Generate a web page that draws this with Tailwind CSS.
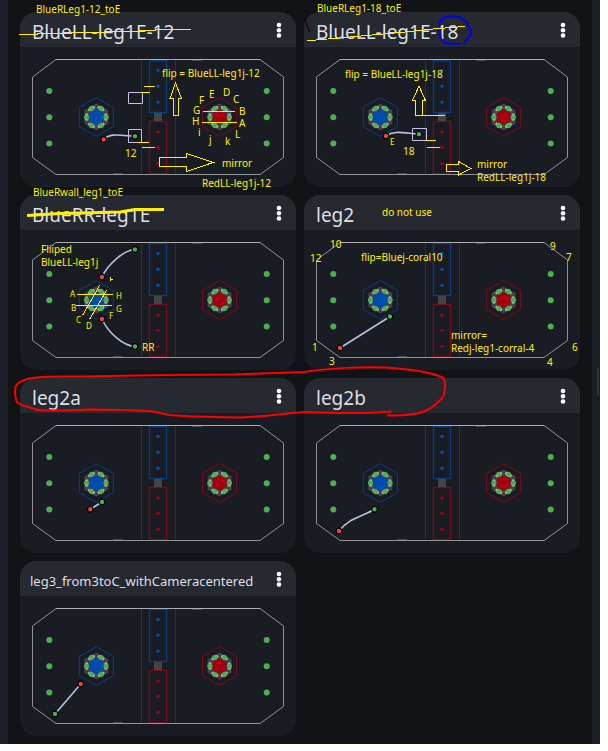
<!DOCTYPE html>
<html lang="en">
<head>
<meta charset="utf-8">
<meta name="viewport" content="width=device-width, initial-scale=1">
<title>Paths</title>
<script src="https://cdn.jsdelivr.net/npm/@tailwindcss/browser@4"></script>
</head>
<body class="bg-white font-['Noto_Sans','Open_Sans',sans-serif]">
<svg class="absolute h-0 w-0" aria-hidden="true">
  <defs>
    <g id="reef">
      <path d="M0-19.3 17-9.7V9.7L0 19.3-17 9.7V-9.7Z" fill="none" stroke="currentColor" stroke-opacity=".72"/>
      <path d="M0-13.500 12-6.800V6.800L0 13.500-12 6.800V-6.800Z" fill="#444447"/>
      <path d="M0-8 7-4V4L0 8-7 4V-4Z" fill="currentColor"/>
      <g id="pair">
        <g id="post"><g fill="#c3b2cc"><circle cx="9.600" cy="-2.200" r="1.500"/><circle cx="9.600" cy="2.200" r="1.500"/></g><circle cx="9.800" r="2.600" fill="#4caf50"/></g>
        <use href="#post" transform="rotate(180)"/>
      </g>
      <use href="#pair" transform="rotate(60)"/>
      <use href="#pair" transform="rotate(120)"/>
    </g>
    <g id="field">
      <path d="M109.500 1V115M143.500 1V115" stroke="#303134" fill="none"/>
      <g fill="none" stroke-width="1.400">
        <rect x="117.500" y="1.500" width="17" height="52" stroke="#0a3d80"/>
        <rect x="117.500" y="62.500" width="17" height="52" stroke="#760d1c"/>
      </g>
      <rect x="122" y="54" width="8" height="8" fill="#444"/>
      <g fill="#0a4aa8"><circle cx="126" cy="11.500" r="1.700"/><circle cx="126" cy="27.300" r="1.700"/><circle cx="126" cy="43.200" r="1.700"/></g>
      <g fill="#a00016"><circle cx="126" cy="73" r="1.700"/><circle cx="126" cy="88.500" r="1.700"/><circle cx="126" cy="104.500" r="1.700"/></g>
      <path d="M24 .5H228L251.500 18V98.500L228 115.500H24L.5 98.500V18Z" fill="none" stroke="#929395"/>
      <path d="M24 .5H228" stroke="#adadaf"/>
      <path d="M160 1.500h10M81 114.500h10" stroke="#4b4b4d"/>
      <g fill="#4caf50"><circle cx="17.300" cy="32" r="3"/><circle cx="17.300" cy="58.200" r="3"/><circle cx="17.300" cy="84.500" r="3"/><circle cx="234.700" cy="32" r="3"/><circle cx="234.700" cy="58.200" r="3"/><circle cx="234.700" cy="84.500" r="3"/></g>
      <use href="#reef" x="64.300" y="58" color="#004bad"/>
      <use href="#reef" x="187.600" y="58" color="#a50012"/>
    </g>
    <circle id="start" r="2.800" fill="#4caf50" stroke="#000" stroke-width="1.200"/>
    <circle id="end" r="2.800" fill="#f44336" stroke="#000" stroke-width="1.200"/>
    <g id="dots" fill="#fff"><circle cx="3" cy="3" r="2.300"/><circle cx="3" cy="8.300" r="2.300"/><circle cx="3" cy="13.500" r="2.300"/></g>
  </defs>
</svg>

<div class="min-h-screen pr-2 pb-[7px]">
<div class="flex min-h-[744px] bg-[#121317]">
  <div class="w-2 shrink-0 bg-[#1a1f27]"></div>
  <main class="grid flex-1 grid-cols-2 content-start gap-2 px-3 pt-3 pb-2">

    <article class="rounded-2xl bg-[#1a1c24]">
      <header class="flex h-[35px] items-center justify-between rounded-t-2xl bg-[#26292f] pl-3">
        <h2 class="pt-1 text-[19px] leading-7 text-[#dfdfe6]">BlueLL-leg1E-12</h2>
        <button type="button" aria-label="Path options" class="flex h-[35px] w-[35px] items-center justify-center"><svg class="h-4 w-1.5" viewBox="0 0 6 16"><use href="#dots"/></svg></button>
      </header>
      <div class="p-3">
        <svg class="relative z-10 block w-full overflow-visible text-[10px]" viewBox="0 0 252 116">
          <use href="#field"/>
          <g transform="translate(-32 -59)" fill="none">
            <path d="M103.700 139.500C110 133 118 135 135 136.300" stroke="#b4c2de" stroke-width="1.600"/>
            <path d="M128.500 92.500h14v11h-14zM128.500 129.500h13v13h-13z" stroke="#c8bfe7"/>
            <use href="#end" x="103.700" y="139.500"/><use href="#start" x="135" y="136.300"/>
            <path stroke="#fff200" shape-rendering="crispEdges" d="M19 34.500H37V33.500H71V32.500H105V31.500H138V30.500H155V29.500H191M144 86.500h11M142 92.500h8M138 142.500h11M142 147.500h13M203 111.500h32M202 122.500h35M175.500 83L170 98.500H173V115.500H178V98.500H181.500ZM159.500 157.500H186.500V153.500L213 162.500 186.500 171.500V166.500H159.500Z"/>
            <g fill="#fff200">
              <text x="36" y="13">BlueRLeg1-12_toE</text>
              <text x="162" y="77">flip = BlueLL-leg1j-12</text>
              <text x="125" y="157">12</text><text x="222" y="167">mirror</text><text x="202" y="187">RedLL-leg1j-12</text>
              <text x="209" y="98">E</text><text x="223" y="96">D</text><text x="233" y="103">C</text><text x="199" y="104">F</text><text x="193" y="114">G</text><text x="239" y="115">B</text><text x="192" y="125">H</text><text x="239" y="127">A</text><text x="198" y="136">i</text><text x="235" y="138">L</text><text x="209" y="143">j</text><text x="225" y="145">k</text>
            </g>
          </g>
        </svg>
      </div>
    </article>

    <article class="rounded-2xl bg-[#1a1c24]">
      <header class="flex h-[35px] items-center justify-between rounded-t-2xl bg-[#26292f] pl-3">
        <h2 class="pt-1 text-[19px] leading-7 text-[#dfdfe6]">BlueLL-leg1E-18</h2>
        <button type="button" aria-label="Path options" class="flex h-[35px] w-[35px] items-center justify-center"><svg class="h-4 w-1.5" viewBox="0 0 6 16"><use href="#dots"/></svg></button>
      </header>
      <div class="p-3">
        <svg class="relative z-10 block w-full overflow-visible text-[10px]" viewBox="0 0 252 116">
          <use href="#field"/>
          <g transform="translate(-316 -59)" fill="none">
            <path d="M386 136C394 130 403 133 419 134.300" stroke="#b4c2de" stroke-width="1.600"/>
            <path d="M412.500 128.500h14v12h-14z" stroke="#c8bfe7"/>
            <use href="#end" x="386" y="136"/><use href="#start" x="419" y="134.300"/>
            <path d="M305 19 309.500 32" stroke="#000"/>
            <path d="M460 44C452 44 446 44 443.500 42 439 38 440 34 439.500 30V24C441 20 444 17 447 16.500H457C463 17 464 21 467 22.500 468 27 471 28 471 33 470 38 466 40 463.500 43.500" stroke="#0000f5" stroke-width="2"/>
            <path stroke="#fff200" shape-rendering="crispEdges" d="M307 40.500 316 40 345 37.500 400 32.500 438 28.500 465 26.500M425 140.500h11M427 147.500h13M445 115.500H415.500V100.500H412.500L419 86 425.500 100.500H422.500V115.500M446.500 164.500H458.500V161.500L471 168.500 458.500 175V171.500H446.500Z"/>
            <g fill="#fff200">
              <text x="317" y="12">BlueRLeg1-18_toE</text>
              <text x="345" y="78">flip = BlueLL-leg1j-18</text>
              <text x="390" y="145" class="text-[8px]">E</text>
              <text x="403" y="155">18</text><text x="477" y="168">mirror</text><text x="477" y="181">RedLL-leg1j-18</text>
            </g>
          </g>
        </svg>
      </div>
    </article>

    <article class="rounded-2xl bg-[#1a1c24]">
      <header class="flex h-[35px] items-center justify-between rounded-t-2xl bg-[#26292f] pl-3">
        <h2 class="pt-1 text-[19px] leading-7 text-[#dfdfe6]">BlueRR-leg1E</h2>
        <button type="button" aria-label="Path options" class="flex h-[35px] w-[35px] items-center justify-center"><svg class="h-4 w-1.5" viewBox="0 0 6 16"><use href="#dots"/></svg></button>
      </header>
      <div class="p-3">
        <svg class="relative z-10 block w-full overflow-visible text-[10px]" viewBox="0 0 252 116">
          <use href="#field"/>
          <g transform="translate(-32 -242)" fill="none">
            <path d="M102 277C108 264 124 250 135 249.500M102 319C108 333 124 346 135 346.500" stroke="#b4c2de" stroke-width="1.600"/>
            <use href="#end" x="102" y="277"/><use href="#start" x="135" y="249.500"/>
            <use href="#end" x="102" y="319"/><use href="#start" x="135" y="346.500"/>
            <path stroke="#fff200" shape-rendering="crispEdges" d="M77 294.500h36M76 305.500h36M99.500 285.500 82.500 315.500M106.500 290.500 89.500 319.500M110.500 277v4M110 279.500h3"/>
            <path stroke="#fff200" stroke-width="3" d="M27 215.500 60 213.500 120 212 135 209.500H164"/>
            <g fill="#fff200">
              <text x="33" y="196">BlueRwall_leg1_toE</text>
              <text x="41" y="253">Fliiped</text><text x="41" y="266">BlueLL-leg1j</text>
              <text x="142" y="351">RR</text>
              <g class="text-[8px]"><text x="70" y="297">A</text><text x="116" y="299">H</text><text x="71" y="311">B</text><text x="116" y="312">G</text><text x="76" y="323">C</text><text x="109" y="319">F</text><text x="86" y="329">D</text></g>
            </g>
          </g>
        </svg>
      </div>
    </article>

    <article class="rounded-2xl bg-[#1a1c24]">
      <header class="flex h-[35px] items-center justify-between rounded-t-2xl bg-[#26292f] pl-3">
        <h2 class="pt-1 text-[19px] leading-7 text-[#dfdfe6]">leg2</h2>
        <button type="button" aria-label="Path options" class="flex h-[35px] w-[35px] items-center justify-center"><svg class="h-4 w-1.5" viewBox="0 0 6 16"><use href="#dots"/></svg></button>
      </header>
      <div class="p-3">
        <svg class="relative z-10 block w-full overflow-visible text-[10px]" viewBox="0 0 252 116">
          <use href="#field"/>
          <g transform="translate(-316 -242)" fill="none">
            <path d="M340 348 390 316.500" stroke="#b4c2de" stroke-width="1.600"/>
            <use href="#end" x="340" y="348"/><use href="#start" x="390" y="316.500"/>
            <g fill="#fff200">
              <text x="382" y="216">do not use</text>
              <text x="330" y="248">10</text><text x="310" y="262">12</text><text x="361" y="261">flip=Bluej-coral10</text>
              <text x="550" y="250">9</text><text x="566" y="261">7</text>
              <text x="451" y="339">mirror=</text><text x="451" y="352">Redj-leg1-corral-4</text>
              <text x="312" y="351">1</text><text x="329" y="365">3</text><text x="572" y="351">6</text><text x="547" y="366">4</text>
            </g>
          </g>
        </svg>
      </div>
    </article>

    <article class="rounded-2xl bg-[#1a1c24]">
      <header class="flex h-[35px] items-center justify-between rounded-t-2xl bg-[#26292f] pl-3">
        <h2 class="pt-1 text-[19px] leading-7 text-[#dfdfe6]">leg2a</h2>
        <button type="button" aria-label="Path options" class="flex h-[35px] w-[35px] items-center justify-center"><svg class="h-4 w-1.5" viewBox="0 0 6 16"><use href="#dots"/></svg></button>
      </header>
      <div class="p-3">
        <svg class="relative z-10 block w-full overflow-visible" viewBox="0 0 252 116">
          <use href="#field"/>
          <g transform="translate(-32 -425)" fill="none">
            <path d="M90.300 509.300 102 502" stroke="#b4c2de" stroke-width="1.600"/>
            <use href="#end" x="90.300" y="509.300"/><use href="#start" x="102" y="502"/>
            <path stroke="#f00" stroke-width="2" stroke-linecap="round" stroke-linejoin="round" d="M391 411.500C370 413.500 330 413 304 412 280 414 255 417.500 235 417.500 205 417 185 416.500 170 415L150 411C130 410 105 409.500 90 409.500 70 410.500 45 411.500 36 409.500 28 406 20 406 17 402 15 398 15 391 15.500 387 17 382 26 378 36.500 377.500 50 376 70 376.500 83 376.500L167 375 233 374.500 304 372C330 368 365 366.500 385 367.500 410 369 438 373 444 379 446 384 445 390 443.500 396 439 402 432 408 425 411 415 415.500 400 415.500 388 415.500"/>
          </g>
        </svg>
      </div>
    </article>

    <article class="rounded-2xl bg-[#1a1c24]">
      <header class="flex h-[35px] items-center justify-between rounded-t-2xl bg-[#26292f] pl-3">
        <h2 class="pt-1 text-[19px] leading-7 text-[#dfdfe6]">leg2b</h2>
        <button type="button" aria-label="Path options" class="flex h-[35px] w-[35px] items-center justify-center"><svg class="h-4 w-1.5" viewBox="0 0 6 16"><use href="#dots"/></svg></button>
      </header>
      <div class="p-3">
        <svg class="block w-full" viewBox="0 0 252 116">
          <use href="#field"/>
          <g transform="translate(-316 -425)" fill="none">
            <path d="M339 531C349 518 362 517 374.500 509.300" stroke="#b4c2de" stroke-width="1.600"/>
            <use href="#end" x="339" y="531"/><use href="#start" x="374.500" y="509.300"/>
          </g>
        </svg>
      </div>
    </article>

    <article class="rounded-2xl bg-[#1a1c24]">
      <header class="flex h-[35px] items-center justify-between rounded-t-2xl bg-[#26292f] pl-2.5">
        <h2 class="pt-1 text-[13px] leading-7 text-[#dfdfe6]">leg3_from3toC_withCameracentered</h2>
        <button type="button" aria-label="Path options" class="flex h-[35px] w-[35px] items-center justify-center"><svg class="h-4 w-1.5" viewBox="0 0 6 16"><use href="#dots"/></svg></button>
      </header>
      <div class="p-3">
        <svg class="block w-full" viewBox="0 0 252 116">
          <use href="#field"/>
          <g transform="translate(-32 -609)" fill="none">
            <path d="M80.700 685 55 715" stroke="#b4c2de" stroke-width="1.600"/>
            <use href="#end" x="80.700" y="685"/><use href="#start" x="55" y="715"/>
          </g>
        </svg>
      </div>
    </article>
  </main>
  <div class="flex w-2 shrink-0 justify-end bg-[#1a1f27] pt-[368px] pr-px"><div class="h-7 w-0.5 rounded-full bg-[#33363d]"></div></div>
</div>
</div>
</body>
</html>
